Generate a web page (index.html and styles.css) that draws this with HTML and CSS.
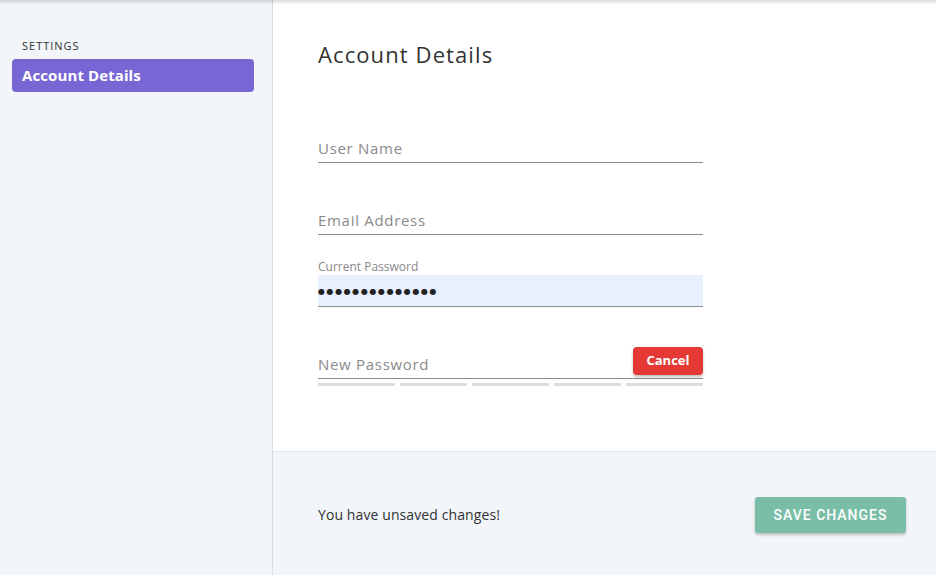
FILE: index.html
```html
<!DOCTYPE html>
<html lang="en">
<head>
<meta charset="utf-8">
<title>Account Details</title>
<link rel="stylesheet" href="styles.css">
</head>
<body>
<div class="top-shadow"></div>
<div class="app">
  <aside class="sidebar">
    <div class="sidebar-title">SETTINGS</div>
    <a class="nav-item active">Account Details</a>
  </aside>
  <main class="main">
    <section class="content">
      <h1 class="heading">Account Details</h1>
      <div class="field">
        <div class="field-label"></div>
        <div class="field-input placeholder">User Name</div>
      </div>
      <div class="field">
        <div class="field-label"></div>
        <div class="field-input placeholder">Email Address</div>
      </div>
      <div class="field">
        <div class="field-label">Current Password</div>
        <div class="field-input filled">&#9679;&#9679;&#9679;&#9679;&#9679;&#9679;&#9679;&#9679;&#9679;&#9679;&#9679;&#9679;&#9679;&#9679;</div>
      </div>
      <div class="field field-new">
        <div class="field-label"></div>
        <div class="field-input placeholder">New Password</div>
        <button class="btn-cancel">Cancel</button>
        <div class="strength">
          <span></span><span></span><span></span><span></span><span></span>
        </div>
      </div>
    </section>
    <footer class="footer">
      <span class="unsaved">You have unsaved changes!</span>
      <button class="btn-save">SAVE CHANGES</button>
    </footer>
  </main>
</div>
</body>
</html>
```
FILE: styles.css
```css
* { box-sizing: border-box; }
html, body {
  margin: 0;
  padding: 0;
  height: 100%;
}
body {
  font-family: "Open Sans", Lato, sans-serif;
  color: #333;
  background: #fff;
  position: relative;
  overflow: hidden;
}
.top-shadow {
  position: absolute;
  top: 0;
  left: 0;
  right: 0;
  height: 5px;
  background: linear-gradient(rgba(0,0,0,0.14), rgba(0,0,0,0));
  z-index: 5;
}
.app {
  display: grid;
  grid-template-columns: 273px 1fr;
  height: 575px;
}
.sidebar {
  background: #f2f5f9;
  border-right: 1px solid #d9dde3;
  padding: 39px 18px 0 12px;
}
.sidebar-title {
  font-size: 11px;
  letter-spacing: 1px;
  color: #333;
  padding-left: 10px;
  line-height: 14px;
  margin-bottom: 6px;
}
.nav-item {
  display: block;
  background: #7866d4;
  color: #fff;
  font-weight: 700;
  font-size: 15px;
  line-height: 33px;
  height: 33px;
  border-radius: 4px;
  padding-left: 10px;
  letter-spacing: 0.1px;
}
.main {
  display: flex;
  flex-direction: column;
}
.content {
  height: 451px;
  padding: 39px 0 0 45px;
  background: #fff;
}
.heading {
  margin: 0 0 22px;
  font-size: 22px;
  line-height: 30px;
  font-weight: 400;
  letter-spacing: 1.1px;
  color: #333;
}
.field {
  position: relative;
  width: 385px;
  padding-top: 24px;
}
.field-label {
  height: 16px;
  font-size: 12px;
  line-height: 16px;
  color: #888;
}
.field-input {
  height: 32px;
  border-bottom: 1px solid #8c8c8c;
  font-size: 15px;
  line-height: 31px;
  padding-top: 2px;
}
.placeholder {
  color: #8a8a8a;
  letter-spacing: 0.7px;
}
.filled {
  background: #e8f0fe;
  color: #222;
  font-size: 8px;
  letter-spacing: 1.6px;
  padding-top: 1px;
  font-family: "DejaVu Sans", sans-serif;
}
.btn-cancel {
  position: absolute;
  right: 0;
  top: 40px;
  width: 70px;
  height: 28px;
  border: none;
  border-radius: 4px;
  background: #e53935;
  color: #fff;
  font-family: "Open Sans", sans-serif;
  font-weight: 700;
  font-size: 13px;
  box-shadow: 0 2px 3px rgba(0,0,0,0.25);
  padding: 0 0 2px;
}
.strength {
  display: grid;
  grid-template-columns: 77px 67px 77px 67px 77px;
  column-gap: 5px;
  margin-top: 4px;
}
.strength span {
  height: 3px;
  background: #dedede;
}
.footer {
  flex: 1;
  background: #f2f5f9;
  border-top: 1px solid #e3e7ec;
  display: flex;
  align-items: center;
  justify-content: space-between;
  padding: 2px 30px 0 45px;
}
.unsaved {
  font-size: 14px;
  color: #333;
  letter-spacing: 0.1px;
}
.btn-save {
  width: 151px;
  height: 36px;
  border: none;
  border-radius: 3px;
  background: #7bbea8;
  color: #fff;
  font-family: Roboto, sans-serif;
  font-weight: 500;
  font-size: 14px;
  letter-spacing: 1px;
  box-shadow: 0 2px 3px rgba(0,0,0,0.22);
  padding: 0;
}
```
